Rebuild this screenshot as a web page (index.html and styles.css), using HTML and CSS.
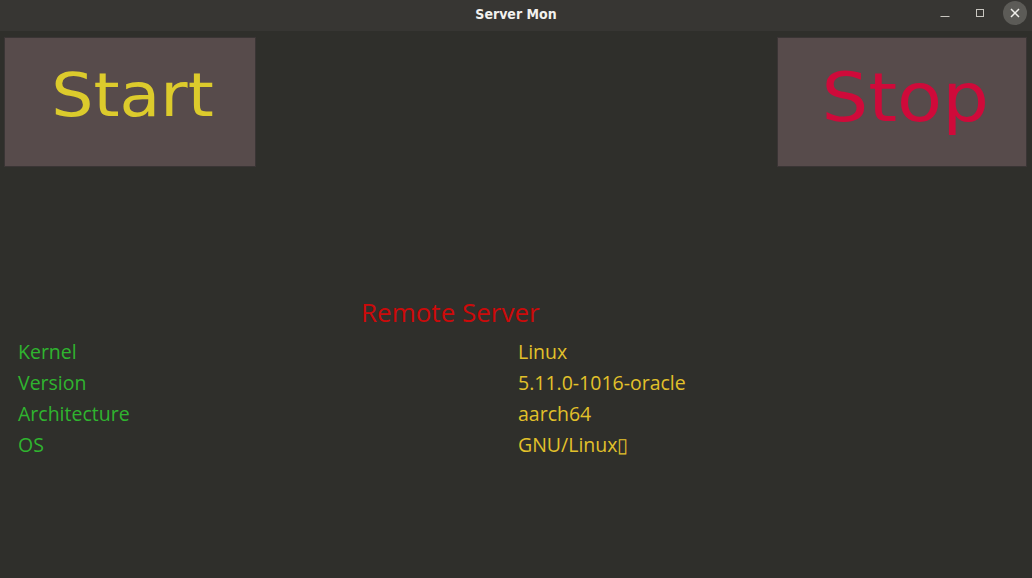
FILE: index.html
```html
<!DOCTYPE html>
<html>
<head>
<meta charset="utf-8">
<link rel="stylesheet" href="styles.css">
</head>
<body>
<div class="window">
  <header class="titlebar">
    <div class="title">Server Mon</div>
    <div class="controls">
      <span class="ctl min"><svg width="12" height="12" viewBox="0 0 12 12"><path d="M1.5 9.5h9" stroke="#c8c6c0" stroke-width="1"/></svg></span>
      <span class="ctl max"><svg width="12" height="12" viewBox="0 0 12 12"><rect x="2.5" y="2.5" width="7" height="7" fill="none" stroke="#c8c6c0" stroke-width="1"/></svg></span>
      <span class="ctl close"><svg width="12" height="12" viewBox="0 0 12 12"><path d="M2 2l8 8M10 2l-8 8" stroke="#f0efeb" stroke-width="1.5"/></svg></span>
    </div>
  </header>
  <main class="content">
    <div class="buttons">
      <button class="btn start"><span>Start</span></button>
      <button class="btn stop"><span>Stop</span></button>
    </div>
    <h2 class="heading">Remote Server</h2>
    <div class="info">
      <div class="label">Kernel</div><div class="value">Linux</div>
      <div class="label">Version</div><div class="value">5.11.0-1016-oracle</div>
      <div class="label">Architecture</div><div class="value">aarch64</div>
      <div class="label">OS</div><div class="value">GNU/Linux&#x25AF;</div>
    </div>
  </main>
</div>
</body>
</html>
```
FILE: styles.css
```css
* { box-sizing: border-box; }
html, body { margin: 0; padding: 0; }
body { width: 1032px; height: 578px; background: #2f2f2b; overflow: hidden; }
.window { width: 1032px; height: 578px; display: flex; flex-direction: column; }
.titlebar {
  height: 31px; background: #373633; position: relative;
  display: flex; align-items: flex-start; justify-content: center; padding-top: 5px;
}
.title {
  font-family: "DejaVu Sans Condensed", "DejaVu Sans", sans-serif; font-weight: bold;
  font-size: 14px; line-height: 18px; color: #f2f1ee;
}
.controls { position: absolute; right: 5px; top: 1px; display: flex; align-items: center; gap: 11px; }
.ctl { width: 24px; height: 24px; display: flex; align-items: center; justify-content: center; }
.ctl.close { background: #5c5b57; border-radius: 50%; }
.content { flex: 1; padding: 6px 4px 0 4px; }
.buttons { display: flex; justify-content: space-between; }
.btn {
  background: #574b4b; border: 1px solid #3a3535; padding: 0; margin: 0;
  height: 130px; display: flex; align-items: center; justify-content: center;
  font-family: "DejaVu Sans", sans-serif; font-weight: normal;
}
.btn.start { width: 252px; color: #dccb2c; font-size: 61px; }
.btn.start span { display: inline-block; transform: scaleX(1.09); margin: 0 0 16px 6px; }
.btn.stop { width: 250px; margin-right: 1px; color: #cf0a3a; font-size: 67px; }
.btn.stop span { display: inline-block; transform: scaleX(1.1); margin: 0 0 9px 6px; }
.heading {
  margin: 128px 0 0 0; text-align: left; padding-left: 357px;
  font-family: "Open Sans", "Noto Sans", sans-serif; font-weight: normal;
  font-size: 26px; line-height: 34px; color: #cc0a0a;
}
.info {
  display: grid; grid-template-columns: 500px auto; padding-left: 14px;
  font-family: "Open Sans", "Noto Sans", sans-serif; font-size: 19.5px; line-height: 31px;
  margin-top: 7px;
}
.label { color: #2fb52f; }
.value { color: #e2c12a; }
```
